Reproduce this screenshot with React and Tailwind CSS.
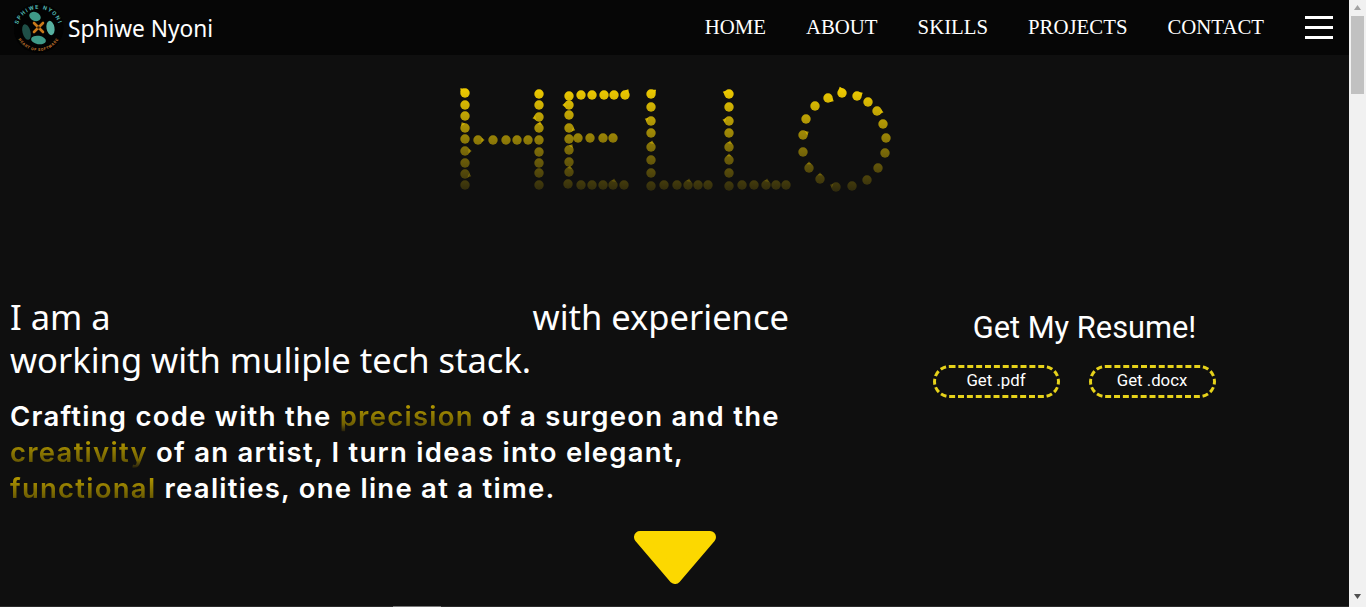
// third value is the angle of the little nub some of the dots have
const dots = [
  // H
  [465, 93, 225], [465, 105], [465, 116], [465, 128, 240], [465, 139], [465, 151, 0], [465, 163], [465, 174, 20], [465, 185],
  [478, 140, 0], [493, 140], [506, 140], [517, 140], [528, 140],
  [539, 94], [539, 105], [539, 117, 170], [539, 128, 280], [539, 140], [539, 152], [539, 163], [539, 173], [539, 185],
  // E
  [569, 96], [569, 105, 180], [569, 115], [569, 128, 20], [569, 139], [569, 150, 300], [569, 162], [569, 172, 280], [568, 184],
  [581, 95], [592, 95], [604, 95], [614, 95], [625, 95, 300],
  [578, 138], [590, 138], [603, 138], [613, 138],
  [581, 185], [592, 185], [603, 185], [613, 185, 280], [624, 185],
  // L
  [651, 94, 320], [651, 107], [651, 121, 200], [651, 133], [651, 147, 280], [651, 160], [651, 173], [651, 186],
  [664, 185], [677, 185], [688, 185, 280], [698, 185], [708, 185],
  // L
  [729, 94, 200], [729, 107], [729, 121, 190], [729, 133], [729, 147, 280], [729, 160, 270], [729, 173], [729, 186],
  [742, 185], [754, 185], [766, 185, 280], [776, 185], [786, 185],
  // O
  [842, 93, 250], [857, 96, 330], [868, 102], [877, 111, 10], [883, 124], [886, 138], [885, 153], [878, 168], [867, 180],
  [852, 186], [836, 187, 200], [820, 179, 270], [809, 168, 270], [803, 152], [803, 135, 330], [806, 119], [815, 106], [828, 98, 30],
];

// small spike sticking out of a dot
function nubPath(x, y, deg) {
  const a = (deg * Math.PI) / 180;
  const p = (ang, r) => `${x + Math.cos(ang) * r} ${y + Math.sin(ang) * r}`;
  return `M${p(a - 0.6, 4.4)} L${p(a, 6.6)} L${p(a + 0.6, 4.4)} Z`;
}

function HelloDots() {
  return (
    <svg width="450" height="115" viewBox="450 80 450 115" className="block mx-auto">
      <defs>
        <linearGradient id="fade" gradientUnits="userSpaceOnUse" x1="0" y1="88" x2="0" y2="192">
          <stop offset="0" stopColor="#f0cc00" />
          <stop offset="1" stopColor="#f0cc00" stopOpacity="0.14" />
        </linearGradient>
      </defs>
      {dots.map(([x, y, nub], i) => (
        <g key={i} fill="url(#fade)">
          <circle cx={x} cy={y} r="4.7" />
          {nub !== undefined && (
            <path d={nubPath(x, y, nub)} />
          )}
        </g>
      ))}
    </svg>
  );
}

function Logo() {
  return (
    <svg width="50" height="50" viewBox="0 0 50 50" className="shrink-0">
      <defs>
        <path id="arcTop" d="M3.5 27 A21 21 0 0 1 45.5 27" />
        <path id="arcBottom" d="M1.5 25 A23 23 0 0 0 47.5 25" />
      </defs>
      <circle cx="24.5" cy="25" r="25" fill="#020202" />
      <text fontFamily="Roboto, sans-serif" fontSize="5.6" fontWeight="700" letterSpacing="1.3" fill="#4fb3ae">
        <textPath href="#arcTop" startOffset="50%" textAnchor="middle">SPHIWE NYONI</textPath>
      </text>
      <text fontFamily="Roboto, sans-serif" fontSize="3.8" fontWeight="700" letterSpacing="0.6" fill="#c87a30">
        <textPath href="#arcBottom" startOffset="50%" textAnchor="middle">HEART OF SOFTWARE</textPath>
      </text>
      <ellipse cx="21" cy="13.5" rx="6" ry="4.4" transform="rotate(25 21 13.5)" fill="#3f9a88" />
      <ellipse cx="36.5" cy="25" rx="4" ry="7.2" transform="rotate(-10 36.5 25)" fill="#57b0a0" />
      <ellipse cx="24.5" cy="37" rx="7.5" ry="4.2" transform="rotate(10 24.5 37)" fill="#3f9a88" />
      <ellipse cx="12.5" cy="29" rx="4" ry="8" transform="rotate(-15 12.5 29)" fill="#1f4f47" />
      <g stroke="#c9791a" strokeWidth="2.6" strokeLinecap="round">
        <path d="M20 20 L29 29 M29 20 L20 29" />
      </g>
      <circle cx="24.5" cy="24.5" r="1.3" fill="#2a1606" />
    </svg>
  );
}

function Scrollbar() {
  return (
    <div className="w-[17px] shrink-0 bg-[#f1f1f1] flex flex-col justify-between">
      <div className="flex flex-col items-center">
        <svg width="17" height="16" viewBox="0 0 17 16"><path d="M8.5 5 L12 10 L5 10 Z" fill="#a3a3a3" /></svg>
        <div className="w-[13px] h-[78px] bg-[#c1c1c1]"></div>
      </div>
      <svg width="17" height="16" viewBox="0 0 17 16" className="mb-[1px]"><path d="M5 4 L12 4 L8.5 9 Z" fill="#505050" /></svg>
    </div>
  );
}

export default function App() {
  const nav = ['HOME', 'ABOUT', 'SKILLS', 'PROJECTS', 'CONTACT'];
  const accent = 'text-transparent bg-clip-text bg-linear-to-b from-[#b09600] from-20% via-[#6f5f02] via-75% to-[#1a1608]';

  return (
    <div className="flex h-[607px] w-full overflow-hidden">
      <div className="flex-1 min-w-0 bg-[#0f0f0f] flex flex-col">
        <nav className="h-[55px] bg-[#060606] flex items-center justify-between pl-[14px] pr-[16px] shrink-0">
          <div className="flex items-center gap-[4px]">
            <Logo />
            <span className="text-white text-[22.7px] mt-[3px] font-['Noto_Sans',sans-serif]">Sphiwe Nyoni</span>
          </div>
          <div className="flex items-center">
            <ul className="flex gap-[40px] mr-[41px] mb-[2px]">
              {nav.map(n => (
                <li key={n} className="text-white text-[20.8px] font-['Liberation_Serif',serif]">{n}</li>
              ))}
            </ul>
            <div className="flex flex-col gap-[7.5px] w-[28px]">
              <div className="h-[2.5px] bg-white"></div>
              <div className="h-[2.5px] bg-white"></div>
              <div className="h-[2.5px] bg-white"></div>
            </div>
          </div>
        </nav>

        <div className="mt-[25px] shrink-0"><HelloDots /></div>

        <div className="flex mt-[100px] shrink-0">
          <div className="w-[820px] pl-[10px] text-white">
            <p className="text-[34.5px] leading-[43px] font-['Noto_Sans',sans-serif]">
              I am a <span className="inline-block w-[404px]"></span> with experience<br />working with muliple tech stack.
            </p>
            <p className="mt-[17px] text-[27.5px] leading-[36px] font-semibold tracking-[1.25px] whitespace-nowrap font-['Inter',sans-serif]">
              Crafting code with the <span className={accent}>precision</span> of a surgeon and the<br />
              <span className={accent}>creativity</span> of an artist, I turn ideas into elegant,<br />
              <span className={accent}>functional</span> realities, one line at a time.
            </p>
          </div>
          <div className="flex-1 flex flex-col items-center pt-[11px] font-['Roboto',sans-serif] text-white">
            <h2 className="text-[30.8px] leading-[44px]">Get My Resume!</h2>
            <div className="flex gap-[29px] mt-[15px] mr-[21px]">
              <a className="w-[127px] h-[33px] pb-[2px] flex items-center justify-center rounded-full border-[3px] border-dashed border-[#e6d21a] text-[16.8px]">Get .pdf</a>
              <a className="w-[127px] h-[33px] pb-[2px] flex items-center justify-center rounded-full border-[3px] border-dashed border-[#e6d21a] text-[16.8px]">Get .docx</a>
            </div>
          </div>
        </div>

        <div className="flex-1 flex flex-col items-center justify-end relative border-b border-[#2a2a2a]">
          <svg width="82" height="53" viewBox="0 0 82 53" className="mb-[22px]">
            <path d="M6 6 L76 6 L41 47 Z" fill="#fcd800" stroke="#fcd800" strokeWidth="12" strokeLinejoin="round" />
          </svg>
          <div className="absolute -bottom-px left-[393px] w-[48px] h-px bg-[#777]"></div>
        </div>
      </div>
      <Scrollbar />
    </div>
  );
}
